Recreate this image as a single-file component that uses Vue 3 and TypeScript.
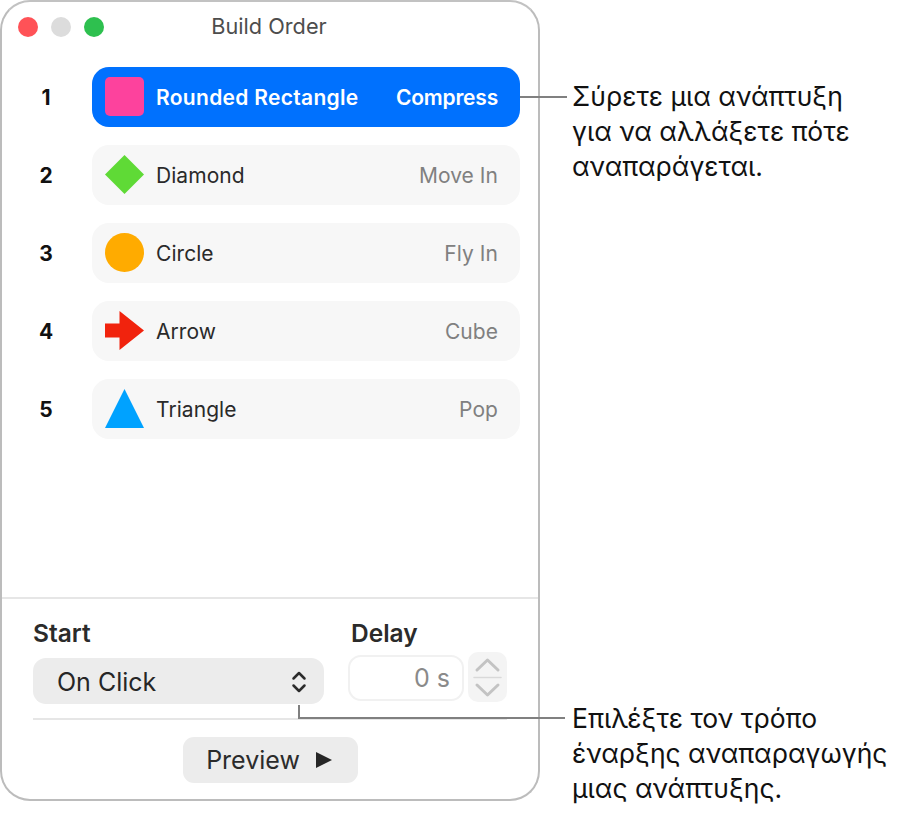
<script setup lang="ts">
type Kind = "square" | "diamond" | "circle" | "arrow" | "triangle";

const builds: { id: number; name: string; effect: string; kind: Kind }[] = [
  { id: 1, name: "Rounded Rectangle", effect: "Compress", kind: "square" },
  { id: 2, name: "Diamond", effect: "Move In", kind: "diamond" },
  { id: 3, name: "Circle", effect: "Fly In", kind: "circle" },
  { id: 4, name: "Arrow", effect: "Cube", kind: "arrow" },
  { id: 5, name: "Triangle", effect: "Pop", kind: "triangle" },
];
</script>

<template>
  <div class="page">
    <div class="window">
      <header class="titlebar">
        <div class="lights">
          <span class="light red"></span>
          <span class="light grey"></span>
          <span class="light green"></span>
        </div>
        <span class="title">Build Order</span>
      </header>

      <div class="list">
        <div v-for="b in builds" :key="b.id" class="row">
          <span class="num">{{ b.id }}</span>
          <div class="item" :class="{ selected: b.id === 1 }">
            <svg class="shape" width="39" height="39" viewBox="0 0 39 39">
              <rect v-if="b.kind === 'square'" width="39" height="39" rx="5" fill="#fd429d" />
              <path v-else-if="b.kind === 'diamond'" d="M19.5 0 39 19.5 19.5 39 0 19.5Z" fill="#5fda36" />
              <circle v-else-if="b.kind === 'circle'" cx="19.5" cy="19.5" r="19.5" fill="#ffab00" />
              <path v-else-if="b.kind === 'arrow'" d="M0 12.500H14.500V0L39 19.500 14.500 39V26.500H0Z" fill="#f1230d" />
              <path v-else d="M19.500 0 39 39H0Z" fill="#00a2ff" />
            </svg>
            <span class="name">{{ b.name }}</span>
            <span class="effect">{{ b.effect }}</span>
          </div>
        </div>
      </div>

      <section class="controls">
        <div class="fields">
          <div class="start">
            <div class="label">Start</div>
            <div class="select">
              <span>On Click</span>
              <svg width="16" height="24" viewBox="0 0 16 24" fill="none" stroke="#2b2b2b" stroke-width="2.500" stroke-linecap="round" stroke-linejoin="round">
                <path d="M2.500 8.500 8 3l5.500 5.500" />
                <path d="M2.500 15.500 8 21l5.500-5.500" />
              </svg>
            </div>
          </div>
          <div class="delay">
            <div class="label">Delay</div>
            <div class="delay-row">
              <div class="input">0 s</div>
              <div class="stepper">
                <svg width="39" height="50" viewBox="0 0 39 50" fill="none" stroke="#c3c3c3" stroke-width="3" stroke-linecap="round" stroke-linejoin="round">
                  <path d="M9 18 19.500 8 30 18" />
                  <path d="M6 25.500H33" stroke-width="1.500" stroke="#d9d9d9" />
                  <path d="M9 33 19.500 43 30 33" />
                </svg>
              </div>
            </div>
          </div>
        </div>
        <div class="rule"></div>
        <div class="actions">
          <button class="preview" type="button">
            Preview
            <svg width="16" height="16" viewBox="0 0 16 16"><path d="M0 0 16 8 0 16Z" fill="#262626" /></svg>
          </button>
        </div>
      </section>
    </div>

    <div class="notes">
      <p class="note">Σύρετε μια ανάπτυξη<br />για να αλλάξετε πότε<br />αναπαράγεται.</p>
      <p class="note">Επιλέξτε τον τρόπο<br />έναρξης αναπαραγωγής<br />μιας ανάπτυξης.</p>
    </div>

    <!-- callout lines run over the window -->
    <div class="line line-top"></div>
    <div class="line line-drop"></div>
    <div class="line line-bottom"></div>
  </div>
</template>

<style scoped>
.page {
  position: relative;
  display: flex;
  width: 897px;
  height: 817px;
  background: #fff;
  font-family: Inter, "Liberation Sans", sans-serif;
  color: #262626;
}

.window {
  box-sizing: border-box;
  display: flex;
  flex-direction: column;
  width: 540px;
  height: 801px;
  border: 2px solid #bcbcbc;
  border-top-color: #c2c2c2;
  border-radius: 30px;
  background: #fff;
}

.titlebar {
  position: relative;
  display: flex;
  align-items: center;
  justify-content: center;
  height: 48px;
  padding-right: 2px;
  flex-shrink: 0;
}

.lights {
  position: absolute;
  left: 16px;
  top: 15px;
  display: flex;
  gap: 13px;
}

.light {
  width: 20px;
  height: 20px;
  border-radius: 50%;
}

.red { background: #ff5257; }
.grey { background: #dcdcdc; }
.green { background: #2ec04f; }

.title {
  font-size: 21.7px;
  color: #4d4d4d;
}

.list {
  flex: 1;
  display: flex;
  flex-direction: column;
  gap: 18px;
  padding-top: 17px;
  padding-right: 18px;
}

.row {
  display: flex;
  align-items: center;
}

.num {
  width: 88px;
  margin-right: 2px;
  text-align: center;
  font-size: 21px;
  font-weight: 700;
  color: #111;
}

.item {
  flex: 1;
  display: flex;
  align-items: center;
  height: 60px;
  padding: 0 22px 0 13px;
  border-radius: 17px;
  background: #f7f7f7;
  font-size: 21px;
  letter-spacing: 0.05px;
}

.item .shape {
  flex-shrink: 0;
  margin: -1px 12px 0 0;
}

.name {
  flex: 1;
  color: #2a2a2a;
}

.effect {
  color: #808080;
}

.selected {
  background: #0071fe;
}

.selected .name,
.selected .effect {
  color: #fff;
  font-weight: 600;
}

.selected .name {
  letter-spacing: 0.3px;
}

.selected .effect {
  letter-spacing: -0.2px;
}

.controls {
  flex-shrink: 0;
  box-sizing: border-box;
  height: 202px;
  padding: 20px 31px 0;
  border-top: 2px solid #e6e6e6;
}

.fields {
  display: flex;
  justify-content: space-between;
}

.label {
  font-size: 24.5px;
  font-weight: 600;
  line-height: 28px;
  color: #2b2b2b;
}

.start .label {
  margin-bottom: 11px;
}

.select {
  box-sizing: border-box;
  display: flex;
  align-items: center;
  justify-content: space-between;
  width: 291px;
  height: 46px;
  padding: 1px 17px 0 24px;
  border-radius: 13px;
  background: #ececec;
  font-size: 25px;
}

.delay {
  width: 159px;
}

.delay .label {
  margin-left: 3px;
  margin-bottom: 5px;
}

.delay-row {
  display: flex;
  align-items: flex-start;
  gap: 4px;
}

.input {
  box-sizing: border-box;
  width: 116px;
  height: 46px;
  margin-top: 3px;
  padding-right: 12px;
  border: 2px solid #f1f1f1;
  border-radius: 13px;
  font-size: 25px;
  line-height: 42px;
  text-align: right;
  color: #8a8a8a;
}

.stepper {
  width: 39px;
  height: 50px;
  border-radius: 10px;
  background: #f4f4f4;
}

.stepper svg {
  display: block;
}

.rule {
  height: 2px;
  margin-top: 14px;
  background: #e6e6e6;
}

.actions {
  display: flex;
  justify-content: center;
  margin-top: 17px;
}

.preview {
  box-sizing: border-box;
  display: flex;
  align-items: center;
  justify-content: center;
  gap: 16px;
  width: 175px;
  height: 46px;
  padding: 0 2px 0 0;
  border: 0;
  border-radius: 11px;
  background: #ececec;
  font-family: inherit;
  font-size: 25px;
  color: #2b2b2b;
}

.notes {
  display: flex;
  flex-direction: column;
  justify-content: space-between;
  box-sizing: border-box;
  height: 817px;
  margin-left: 32px;
  padding: 79px 0 11px;
}

.note {
  margin: 0;
  font-size: 26.5px;
  line-height: 35px;
  color: #111;
  white-space: nowrap;
}

.line {
  position: absolute;
  background: #808080;
}

.line-top {
  left: 520px;
  top: 96px;
  width: 47px;
  height: 2px;
}

.line-drop {
  left: 298px;
  top: 705px;
  width: 2px;
  height: 14px;
}

.line-bottom {
  left: 298px;
  top: 717px;
  width: 267px;
  height: 2px;
}
</style>
